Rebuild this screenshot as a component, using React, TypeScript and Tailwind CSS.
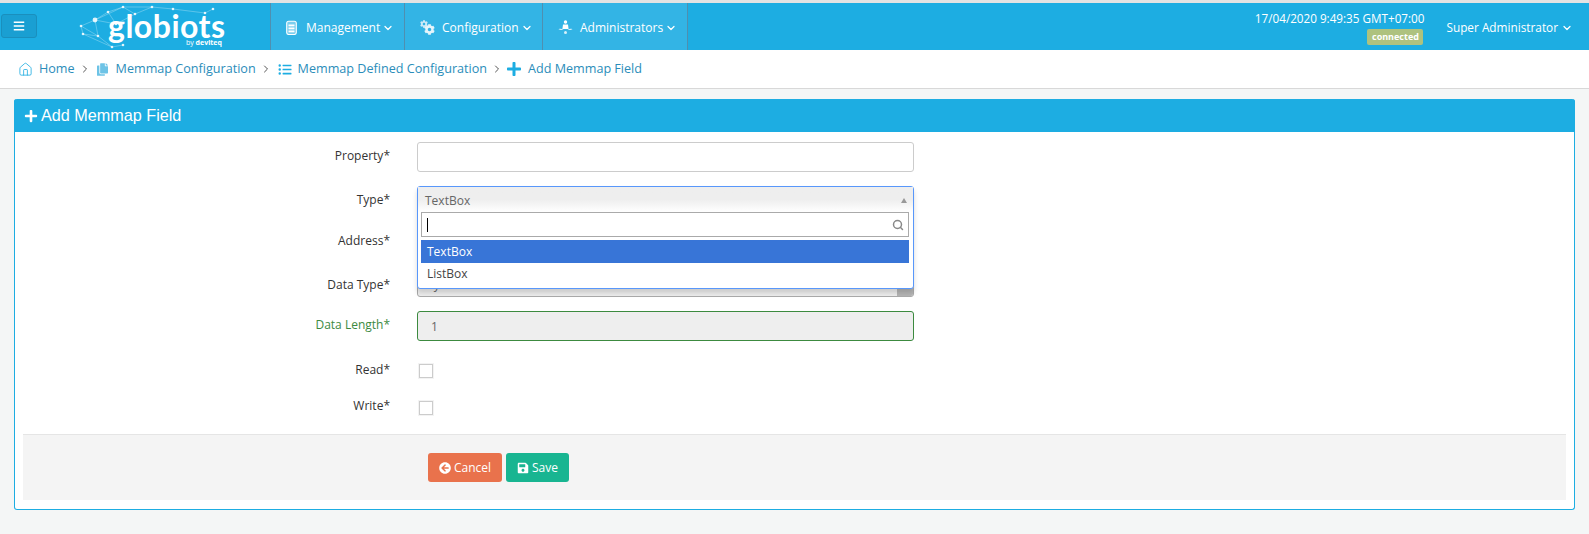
import { ChevronDown, ChevronRight, Search, Home } from 'lucide-react';
import { FaBars, FaPlus, FaArrowCircleLeft, FaSave, FaListUl, FaCopy, FaCog } from 'react-icons/fa';

const sans = "font-['Open_Sans',sans-serif]";

function Logo() {
  const pts: [number, number][] = [[11, 22], [25, 16], [38, 8], [53, 3], [82, 3], [103, 5], [135, 9], [143, 5], [28, 32], [13, 30], [42, 43], [53, 41], [46, 20], [65, 10]];
  const lines: [number, number][] = [[0, 1], [1, 2], [2, 3], [3, 4], [4, 5], [5, 6], [6, 7], [3, 13], [13, 4], [1, 12], [2, 12], [0, 9], [9, 8], [1, 8], [0, 8], [8, 10], [10, 11], [9, 10], [12, 13], [1, 3]];
  return (
    <div className="relative w-[150px] h-[46px] ml-[-9px]">
      <svg width="160" height="46" viewBox="0 0 160 46" className="absolute left-0 top-0">
        {lines.map(([a, b], i) => (
          <line key={i} x1={pts[a][0]} y1={pts[a][1]} x2={pts[b][0]} y2={pts[b][1]} stroke="#ffffff" strokeOpacity="0.4" strokeWidth="0.7" />
        ))}
        {pts.map(([x, y], i) => (
          <circle key={i} cx={x} cy={y} r={i === 1 ? 2.4 : 1.3} fill="#ffffff" fillOpacity="0.85" />
        ))}
      </svg>
      <span className="absolute left-[38px] top-[10px] font-['Lato',sans-serif] font-bold text-[32px] leading-[24px] text-white tracking-[0.5px]">globiots</span>
      <span className={`absolute left-[116px] top-[34px] whitespace-nowrap ${sans} text-[7px] leading-[9px] text-white`}>by <b>deviteq</b></span>
    </div>
  );
}

function BatteryIcon() {
  return (
    <svg width="11" height="15" viewBox="0 0 11 15" fill="none">
      <rect x="0.700" y="1.200" width="9.600" height="13.300" rx="2" stroke="#fff" strokeWidth="1.100" fill="#ffffff" fillOpacity="0.35" />
      <rect x="2.500" y="4.500" width="6" height="1.800" fill="#fff" />
      <rect x="2.500" y="7.500" width="6" height="1.800" fill="#fff" />
      <rect x="2.500" y="10.500" width="6" height="1.800" fill="#fff" />
    </svg>
  );
}

function GearsIcon() {
  return (
    <span className="relative block w-[15px] h-[15px]">
      <FaCog className="absolute left-0 top-0 w-[8px] h-[8px] text-[#cdeaf7]" />
      <FaCog className="absolute left-[4px] top-[4px] w-[11px] h-[11px] text-[#e6f5fb]" />
    </span>
  );
}

function AdminIcon() {
  return (
    <svg width="15" height="15" viewBox="0 0 15 15" fill="#fff">
      <circle cx="7.500" cy="2" r="1.700" />
      <path d="M5 4.500h5l.6 4.500H4.400z" />
      <path d="M.5 9.200c2-.7 3.500-.2 5 .8H2.500z" fillOpacity="0.8" />
      <path d="M14.500 9.200c-2-.7-3.500-.2-5 .8h3z" fillOpacity="0.8" />
      <circle cx="7.500" cy="12.500" r="1.500" fillOpacity="0.8" />
    </svg>
  );
}

function NavItem({ icon, label, width, box }: { icon: React.ReactNode; label: string; width: string; box: string }) {
  return (
    <div className={`${width} h-full flex items-center border-r border-[#4f8fb0] bg-[#33b4e5] pl-[15px] pt-[2px]`}>
      <span className={`${box} flex`}>{icon}</span>
      <span className="text-[12px] text-white">{label}</span>
      <ChevronDown className="w-[12px] h-[12px] text-white ml-[2px]" strokeWidth={2.5} />
    </div>
  );
}

function Crumb({ icon, label, last }: { icon: React.ReactNode; label: string; last?: boolean }) {
  return (
    <>
      {icon}
      <span className="text-[12.600px] text-[#2a8dba] ml-[6px]">{label}</span>
      {!last && <ChevronRight className="w-[12px] h-[12px] text-[#555555] ml-[4px] mr-[6px]" strokeWidth={2} />}
    </>
  );
}

function Row({ label, mt, children, green, labelPt }: { label: string; mt: string; children: React.ReactNode; green?: boolean; labelPt?: string }) {
  return (
    <div className={`flex ${mt}`}>
      <label className={`w-[375px] text-right text-[12px] leading-[17px] ${labelPt || 'pt-[5px]'} ${green ? 'text-[#3c8a3f]' : 'text-[#333333]'}`}>{label}</label>
      <div className="ml-[27px] w-[497px]">{children}</div>
    </div>
  );
}

export default function App() {
  return (
    <div className={`w-[1589px] h-[534px] overflow-hidden bg-[#f4f6f6] border-t-[3px] border-[#e3e3e3] ${sans}`}>
      <header className="h-[47px] bg-[#1dade2] flex items-center">
        <div className="w-[36px] h-[24px] ml-[1px] mr-[42px] mb-[2px] rounded-[3px] bg-[#1a9fd2] border border-[#1a8fbd] flex items-center justify-center">
          <FaBars className="w-[12px] h-[12px] text-white" />
        </div>
        <Logo />
        <div className="ml-[50px] h-full flex border-l border-[#4f8fb0]">
          <NavItem icon={<BatteryIcon />} label="Management" width="w-[134px]" box="w-[20px]" />
          <NavItem icon={<GearsIcon />} label="Configuration" width="w-[138px]" box="w-[22px]" />
          <NavItem icon={<AdminIcon />} label="Administrators" width="w-[145px]" box="w-[22px]" />
        </div>
        <div className="ml-auto flex h-full">
          <div className="flex flex-col items-end pt-[7px]">
            <span className="text-[11.700px] leading-[17px] text-white">17/04/2020 9:49:35 GMT+07:00</span>
            <span className="mt-[2px] mr-[1px] h-[16px] w-[56px] rounded-[2px] bg-[#aec27f] text-[9px] leading-[16px] font-bold text-white text-center">connected</span>
          </div>
          <div className="ml-[22px] mr-[16px] flex items-center h-[50px]">
            <span className="text-[11.800px] text-white">Super Administrator</span>
            <ChevronDown className="w-[12px] h-[12px] text-white ml-[3px]" strokeWidth={2.5} />
          </div>
        </div>
      </header>

      <nav className="h-[39px] bg-white border-b border-[#d8d8d8] flex items-center pl-[18px]">
        <Crumb icon={<Home className="w-[15px] h-[15px] text-[#1dade2]" strokeWidth={1.3} />} label="Home" />
        <Crumb icon={<FaCopy className="w-[11px] h-[13px] mr-[2px] text-[#6dc3e6]" />} label="Memmap Configuration" />
        <Crumb icon={<FaListUl className="w-[14px] h-[13px] text-[#1dade2]" />} label="Memmap Defined Configuration" />
        <Crumb icon={<FaPlus className="w-[16px] h-[16px] -ml-[3px] text-[#1dade2]" />} label="Add Memmap Field" last />
      </nav>

      <main className="mt-[10px] mx-[14px] h-[411px] rounded-[3px] border-x border-b border-[#1dade2] bg-white">
        <div className="-mx-px h-[33px] rounded-t-[3px] bg-[#1dade2] flex items-center pl-[10px]">
          <FaPlus className="w-[14px] h-[14px] text-white mr-[3px]" />
          <h1 className="font-['Liberation_Sans',sans-serif] text-[16.200px] text-white">Add Memmap Field</h1>
        </div>

        <div className="relative pt-[10px]">
          <Row label="Property*" mt="">
            <div className="h-[30px] rounded-[3px] border border-[#cccccc] bg-white" />
          </Row>
          <Row label="Type*" mt="mt-[14px]">
            <div className="h-[30px]" />
          </Row>
          <Row label="Address*" mt="mt-[11px]">
            <div className="h-[30px] rounded-[3px] border border-[#cccccc] bg-white" />
          </Row>
          <Row label="Data Type*" mt="mt-[10px]" labelPt="pt-[9px]">
            <div className="h-[30px] rounded-[3px] border border-[#aaaaaa] bg-[#eeeeee] flex justify-between overflow-hidden">
              <span className="pl-[8px] text-[12px] leading-[34px] text-[#666666]">Byte</span>
              <span className="w-[16px] bg-[#b5b5b5]" />
            </div>
          </Row>
          <Row label="Data Length*" mt="mt-[14px]" green>
            <div className="h-[30px] rounded-[3px] border border-[#3c8a3f] bg-[#eeeeee] pl-[13px] text-[12px] leading-[30px] text-[#666666]">1</div>
          </Row>
          <Row label="Read*" mt="mt-[13px]" labelPt="pt-[7px]">
            <div className="w-[14px] h-[14px] mt-[10px] ml-[2px] border border-[#cccccc] bg-white shadow-[0_0_0_1px_#f3f3f3]" />
          </Row>
          <Row label="Write*" mt="mt-[13px]" labelPt="pt-[6px]">
            <div className="w-[14px] h-[14px] mt-[10px] ml-[2px] border border-[#cccccc] bg-white shadow-[0_0_0_1px_#f3f3f3]" />
          </Row>

          {/* open select, sits over Address and Data Type */}
          <div className="absolute left-[402px] top-[54px] w-[497px] h-[103px] rounded-[3px] border border-[#5897fb] bg-white shadow-[0_4px_5px_rgba(0,0,0,0.15)]">
            <div className="h-[25px] flex items-center justify-between pl-[7px] pr-[6px] pt-[2px] bg-gradient-to-b from-[#eeeeee] via-[#eeeeee] to-white text-[12px] text-[#666666]">
              <span>TextBox</span>
              <span className="w-0 h-0 border-x-[3px] border-x-transparent border-b-[5px] border-b-[#999999]" />
            </div>
            <div className="ml-[3px] mr-[4px] h-[25px] border border-[#aaaaaa] flex items-center justify-between pl-[5px] pr-[4px]">
              <span className="w-px h-[14px] bg-black" />
              <Search className="w-[12px] h-[12px] text-[#888888]" strokeWidth={3} />
            </div>
            <div className="ml-[3px] mr-[4px] mt-[3px] h-[23px] bg-[#3875d7] pl-[6px] text-[12px] leading-[23px] text-white">TextBox</div>
            <div className="ml-[3px] mr-[4px] h-[22px] pl-[6px] text-[12px] leading-[22px] text-[#444444]">ListBox</div>
          </div>
        </div>

        <div className="mx-[8px] mt-[19px] h-[66px] border-t border-[#e5e5e5] bg-[#f4f4f4] flex items-start pl-[405px] pt-[18px] gap-[4px]">
          <button className="w-[74px] h-[29px] rounded-[3px] bg-[#e9724c] flex items-center justify-center text-[12px] text-white">
            <FaArrowCircleLeft className="w-[12px] h-[12px] mr-[3px]" />Cancel
          </button>
          <button className="w-[63px] h-[29px] rounded-[3px] bg-[#18b591] flex items-center justify-center text-[12px] text-white">
            <FaSave className="w-[12px] h-[12px] mr-[3px]" />Save
          </button>
        </div>
      </main>
    </div>
  );
}
